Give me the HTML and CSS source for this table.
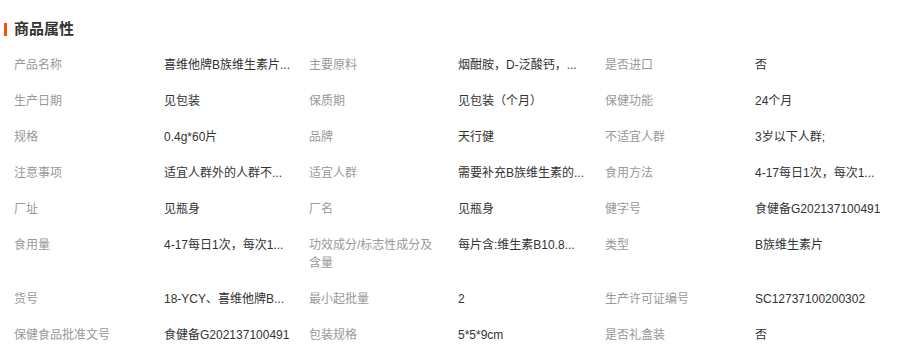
FILE: index.html
```html
<!DOCTYPE html>
<html lang="zh-CN">
<head>
<meta charset="utf-8">
<title>商品属性</title>
<link rel="stylesheet" href="styles.css">
</head>
<body>
<section class="attrs">
  <h2 class="attrs-title">商品属性</h2>
  <div class="attrs-grid">
    <div class="k">产品名称</div><div class="v">喜维他牌B族维生素片...</div>
    <div class="k">主要原料</div><div class="v">烟酣胺，D-泛酸钙，...</div>
    <div class="k">是否进口</div><div class="v">否</div>

    <div class="k">生产日期</div><div class="v">见包装</div>
    <div class="k">保质期</div><div class="v">见包装（个月）</div>
    <div class="k">保健功能</div><div class="v">24个月</div>

    <div class="k">规格</div><div class="v">0.4g*60片</div>
    <div class="k">品牌</div><div class="v">天行健</div>
    <div class="k">不适宜人群</div><div class="v">3岁以下人群;</div>

    <div class="k">注意事项</div><div class="v">适宜人群外的人群不...</div>
    <div class="k">适宜人群</div><div class="v">需要补充B族维生素的...</div>
    <div class="k">食用方法</div><div class="v">4-17每日1次，每次1...</div>

    <div class="k">厂址</div><div class="v">见瓶身</div>
    <div class="k">厂名</div><div class="v">见瓶身</div>
    <div class="k">健字号</div><div class="v">食健备G202137100491</div>

    <div class="k">食用量</div><div class="v">4-17每日1次，每次1...</div>
    <div class="k">功效成分/标志性成分及含量</div><div class="v">每片含:维生素B10.8...</div>
    <div class="k">类型</div><div class="v">B族维生素片</div>

    <div class="k">货号</div><div class="v">18-YCY、喜维他牌B...</div>
    <div class="k">最小起批量</div><div class="v">2</div>
    <div class="k">生产许可证编号</div><div class="v">SC12737100200302</div>

    <div class="k">保健食品批准文号</div><div class="v">食健备G202137100491</div>
    <div class="k">包装规格</div><div class="v">5*5*9cm</div>
    <div class="k">是否礼盒装</div><div class="v">否</div>
  </div>
</section>
</body>
</html>
```

FILE: styles.css
```css
html, body {
  margin: 0;
  padding: 0;
  background: #fff;
}

body {
  font-family: "Liberation Sans", "Noto Sans CJK SC", sans-serif;
  font-size: 12px;
  color: #333;
}

.attrs {
  padding-top: 20px;
}

.attrs-title {
  display: flex;
  align-items: center;
  margin: 0;
  padding-left: 4px;
  height: 18px;
  font-size: 15px;
  line-height: 18px;
  font-weight: bold;
  color: #333;
}

.attrs-title::before {
  content: "";
  display: block;
  width: 3px;
  height: 13px;
  background: #ff5000;
  margin-right: 7px;
}

.attrs-grid {
  margin-top: 9px;
  padding-left: 14px;
  display: grid;
  grid-template-columns: 150px 145px 149px 147px 150px 140px;
}

.k, .v {
  padding: 9px 0;
  line-height: 18px;
}

.k {
  color: #999;
  padding-right: 20px;
}

.v {
  color: #333;
  white-space: nowrap;
  overflow: hidden;
}
```
